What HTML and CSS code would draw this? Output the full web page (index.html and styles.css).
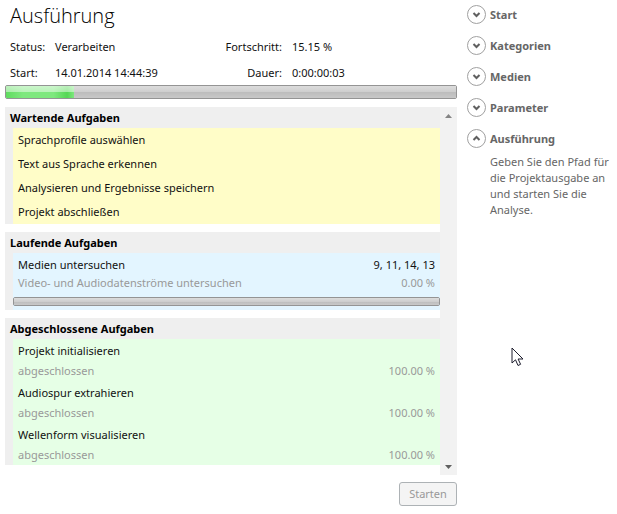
FILE: index.html
```html
<!DOCTYPE html>
<html lang="de">
<head>
<meta charset="utf-8">
<title>Ausführung</title>
<link rel="stylesheet" href="styles.css">
</head>
<body>
<div class="page">
  <main class="main">
    <h1 class="title">Ausführung</h1>
    <dl class="status">
      <dt>Status:</dt><dd>Verarbeiten</dd>
      <dt class="second">Fortschritt:</dt><dd>15.15 %</dd>
      <dt>Start:</dt><dd>14.01.2014 14:44:39</dd>
      <dt class="second">Dauer:</dt><dd>0:00:00:03</dd>
    </dl>
    <progress class="bar" max="100" value="15.15" aria-label="Fortschritt"></progress>
    <div class="tasks">
      <div class="groups">
        <section class="group">
          <h2>Wartende Aufgaben</h2>
          <ul class="list waiting">
            <li>Sprachprofile auswählen</li>
            <li>Text aus Sprache erkennen</li>
            <li>Analysieren und Ergebnisse speichern</li>
            <li>Projekt abschließen</li>
          </ul>
        </section>
        <section class="group">
          <h2>Laufende Aufgaben</h2>
          <ul class="list running">
            <li>
              <div class="line"><span>Medien untersuchen</span><span>9, 11, 14, 13</span></div>
              <div class="line muted"><span>Video- und Audiodatenströme untersuchen</span><span>0.00 %</span></div>
              <progress class="bar small" max="100" value="0" aria-label="Medien untersuchen"></progress>
            </li>
          </ul>
        </section>
        <section class="group">
          <h2>Abgeschlossene Aufgaben</h2>
          <ul class="list done">
            <li>
              <div class="line"><span>Projekt initialisieren</span></div>
              <div class="line muted"><span>abgeschlossen</span><span>100.00 %</span></div>
            </li>
            <li>
              <div class="line"><span>Audiospur extrahieren</span></div>
              <div class="line muted"><span>abgeschlossen</span><span>100.00 %</span></div>
            </li>
            <li>
              <div class="line"><span>Wellenform visualisieren</span></div>
              <div class="line muted"><span>abgeschlossen</span><span>100.00 %</span></div>
            </li>
          </ul>
        </section>
      </div>
      <div class="scrollbar">
        <button type="button" aria-label="Nach oben"><svg width="7" height="4" viewBox="0 0 7 4"><path d="M0 4 3.500 0 7 4z" fill="#858585"/></svg></button>
        <button type="button" aria-label="Nach unten"><svg width="7" height="4" viewBox="0 0 7 4"><path d="M0 0h7L3.500 4z" fill="#606060"/></svg></button>
      </div>
    </div>
    <div class="actions"><button type="button" class="start" disabled>Starten</button></div>
  </main>
  <nav class="steps">
    <button type="button" class="step"><svg width="20" height="20" viewBox="0 0 20 20"><circle cx="9.500" cy="9.500" r="9"/><path d="M6.500 8 9.500 11l3-3"/></svg>Start</button>
    <button type="button" class="step"><svg width="20" height="20" viewBox="0 0 20 20"><circle cx="9.500" cy="9.500" r="9"/><path d="M6.500 8 9.500 11l3-3"/></svg>Kategorien</button>
    <button type="button" class="step"><svg width="20" height="20" viewBox="0 0 20 20"><circle cx="9.500" cy="9.500" r="9"/><path d="M6.500 8 9.500 11l3-3"/></svg>Medien</button>
    <button type="button" class="step"><svg width="20" height="20" viewBox="0 0 20 20"><circle cx="9.500" cy="9.500" r="9"/><path d="M6.500 8 9.500 11l3-3"/></svg>Parameter</button>
    <button type="button" class="step" aria-expanded="true"><svg width="20" height="20" viewBox="0 0 20 20"><circle cx="9.500" cy="9.500" r="9"/><path d="M6.500 11 9.500 8l3 3"/></svg>Ausführung</button>
    <p class="hint">Geben Sie den Pfad für die Projektausgabe an und starten Sie die Analyse.</p>
  </nav>
</div>
<svg class="pointer" width="13" height="20" viewBox="0 0 13 20"><path d="M1 1v15l3.500-3.200L7 18.500l2.600-1.200-2.500-5.300H12z" fill="#fff" stroke="#1c1c2c"/></svg>
</body>
</html>
```
FILE: styles.css
```css
* { box-sizing: border-box; }
body {
  margin: 0;
  background: #fff;
  color: #111;
  font: 11px/20px "Noto Sans", "Open Sans", sans-serif;
}
h1, h2, dl, dd, ul, p { margin: 0; padding: 0; }
button { font: inherit; }
.page {
  display: grid;
  grid-template-columns: minmax(0, 1fr) 150px;
  gap: 10px;
  padding-left: 5px;
}
.title {
  padding: 2px 5px 0;
  color: #000;
  font-family: "Open Sans", "Noto Sans", sans-serif;
  font-size: 20px;
  line-height: 28px;
  font-weight: 300;
}
.status {
  display: grid;
  grid-template-columns: 45px 1fr auto 165px;
  grid-auto-rows: 20px;
  row-gap: 6px;
  align-items: center;
  padding: 7px 0 2px 5px;
}
.second { text-align: right; padding-right: 10px; }
.bar {
  appearance: none;
  display: block;
  width: 100%;
  height: 14px;
  border: 1px solid #949494;
  border-radius: 2px;
  overflow: hidden;
  background: #c6c6c6;
}
.bar::-webkit-progress-bar {
  background: linear-gradient(#dcdcdc, #cecece 50%, #bcbcbc 50%, #c8c8c8);
}
.bar::-webkit-progress-value {
  background:
    linear-gradient(rgba(255, 255, 255, .6), rgba(255, 255, 255, .45) 50%, transparent 50%),
    linear-gradient(90deg, #5fdc5f, #7ee87e 25%, #7ee87e 70%, #55d855 90%, #7ee87e);
}
.small { height: 9px; }
.tasks { display: flex; margin-top: 8px; }
.groups {
  flex: 1;
  display: flex;
  flex-direction: column;
  gap: 8px;
  padding-bottom: 10px;
}
.group { background: #efefef; padding-left: 8px; }
.group h2 {
  margin-left: -3px;
  font-size: 11px;
  line-height: 21px;
  font-weight: 700;
  color: #000;
}
.list { list-style: none; }
.waiting { background: #fffdc8; }
.waiting li { padding: 0 5px; line-height: 24px; }
.running { background: #e3f5ff; padding: 3px 0 4px; }
.done { background: #e6ffe6; }
.done li { padding: 2px 0 0; }
.line { display: flex; justify-content: space-between; padding: 0 5px; line-height: 20px; }
.running .line { line-height: 18px; }
.running .small { margin-top: 5px; }
.muted { color: #999; }
.scrollbar {
  width: 17px;
  display: flex;
  flex-direction: column;
  justify-content: space-between;
  background: #f2f2f2;
}
.scrollbar button {
  display: grid;
  place-items: center;
  height: 17px;
  padding: 0;
  border: 0;
  background: none;
}
.actions { display: flex; justify-content: flex-end; margin-top: 7px; }
.start {
  width: 58px;
  height: 24px;
  padding: 0;
  border: 1px solid #adb2b5;
  border-radius: 3px;
  background: #f4f4f4;
  color: #999;
}
.steps {
  display: flex;
  flex-direction: column;
  align-items: flex-start;
  gap: 11px;
  padding-top: 5px;
  color: #666;
}
.step {
  display: flex;
  align-items: center;
  gap: 3px;
  height: 20px;
  padding: 0;
  border: 0;
  background: none;
  color: inherit;
  font-weight: 700;
}
.step circle { fill: #fff; stroke: #a0a0a0; }
.step path { fill: none; stroke: #606060; stroke-width: 2; }
.hint { margin-top: -6px; padding-left: 23px; line-height: 16px; }
.pointer { position: absolute; left: 511px; top: 347px; }
```
